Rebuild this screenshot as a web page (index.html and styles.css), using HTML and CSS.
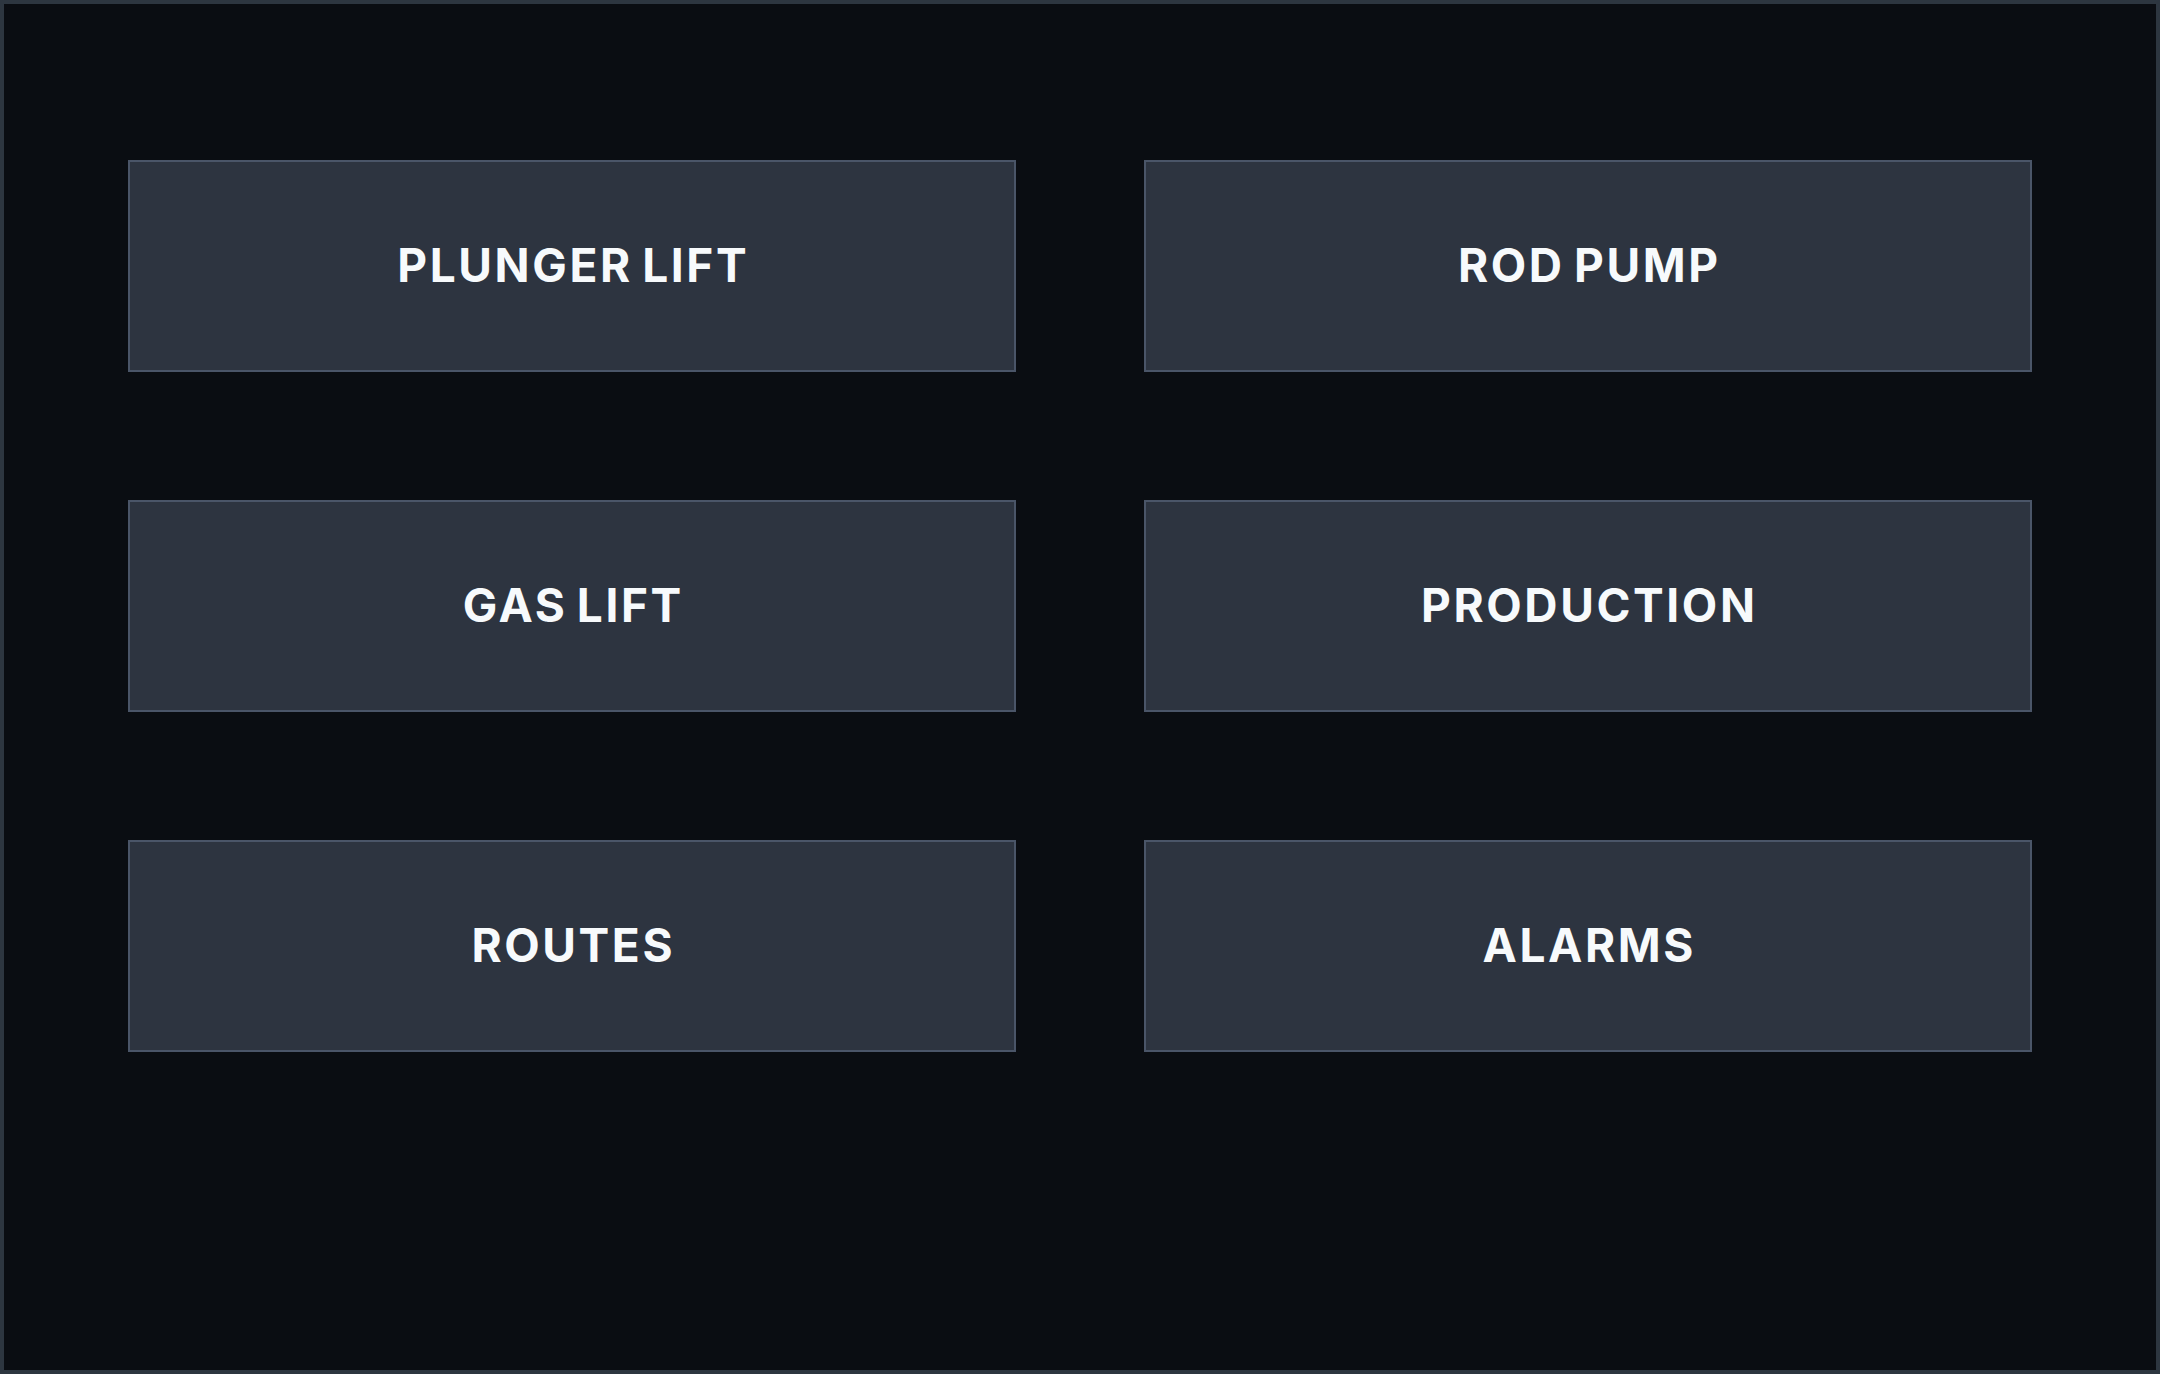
FILE: index.html
```html
<!DOCTYPE html>
<html lang="en">
<head>
<meta charset="utf-8">
<title>Menu</title>
<link rel="stylesheet" href="styles.css">
</head>
<body>
<div class="frame">
  <div class="grid">
    <div class="tile"><span class="label">PLUNGER LIFT</span></div>
    <div class="tile"><span class="label">ROD PUMP</span></div>
    <div class="tile"><span class="label">GAS LIFT</span></div>
    <div class="tile"><span class="label">PRODUCTION</span></div>
    <div class="tile"><span class="label">ROUTES</span></div>
    <div class="tile"><span class="label">ALARMS</span></div>
  </div>
</div>
</body>
</html>
```

FILE: styles.css
```css
html, body {
  margin: 0;
  padding: 0;
  background: #0a0d12;
}

.frame {
  box-sizing: border-box;
  width: 2160px;
  height: 1374px;
  border: 4px solid #2d3640;
  background: #0a0d12;
  padding: 156px 124px;
}

.grid {
  display: grid;
  grid-template-columns: 1fr 1fr;
  grid-auto-rows: 212px;
  column-gap: 128px;
  row-gap: 128px;
}

.tile {
  box-sizing: border-box;
  border: 2px solid #4a5568;
  background: #2d3440;
  display: flex;
  align-items: center;
  justify-content: center;
}

.label {
  font-family: Inter, "Liberation Sans", sans-serif;
  font-weight: 700;
  font-size: 46px;
  line-height: 1;
  color: #f7fafc;
  letter-spacing: 2.6px;
  word-spacing: -4px;
  margin-right: -2.6px;
  padding-bottom: 2px;
}
```
